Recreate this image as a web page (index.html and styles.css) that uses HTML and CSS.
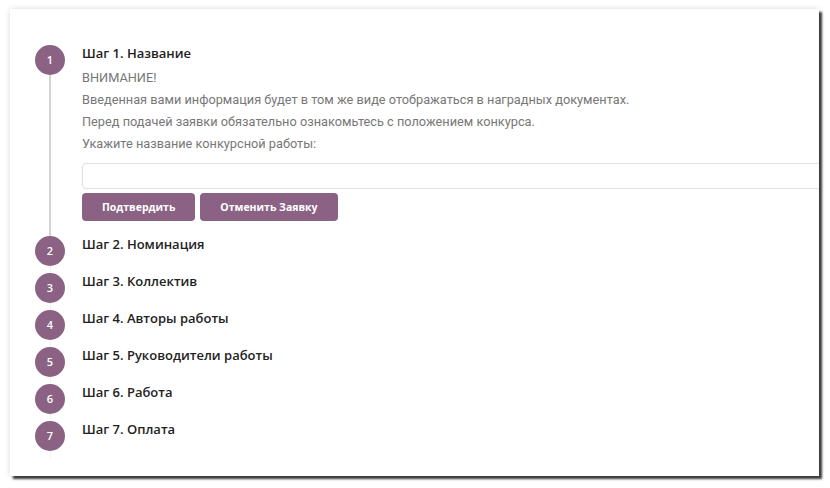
FILE: index.html
```html
<!DOCTYPE html>
<html>
  <head>
    <title>Подача заявки</title>
    <link rel="stylesheet" href="styles.css">
  </head>
  <body>
    <div class="page">
      <div class="panel">
        <div class="steps">
          <div class="step step-active">
            <div class="marker">
              <div class="circle">1</div>
              <div class="line"></div>
            </div>
            <div class="step-body">
              <h3 class="step-title">Шаг 1. Название</h3>
              <p>ВНИМАНИЕ!</p>
              <p>Введенная вами информация будет в том же виде отображаться в наградных документах.</p>
              <p>Перед подачей заявки обязательно ознакомьтесь с положением конкурса.</p>
              <p>Укажите название конкурсной работы:</p>
              <input type="text" class="field" />
              <div class="actions">
                <button>Подтвердить</button>
                <button>Отменить Заявку</button>
              </div>
            </div>
          </div>
          <div class="step">
            <div class="marker">
              <div class="circle">2</div>
              <div class="line"></div>
            </div>
            <div class="step-body"><h3 class="step-title">Шаг 2. Номинация</h3></div>
          </div>
          <div class="step">
            <div class="marker">
              <div class="circle">3</div>
              <div class="line"></div>
            </div>
            <div class="step-body"><h3 class="step-title">Шаг 3. Коллектив</h3></div>
          </div>
          <div class="step">
            <div class="marker">
              <div class="circle">4</div>
              <div class="line"></div>
            </div>
            <div class="step-body"><h3 class="step-title">Шаг 4. Авторы работы</h3></div>
          </div>
          <div class="step">
            <div class="marker">
              <div class="circle">5</div>
              <div class="line"></div>
            </div>
            <div class="step-body"><h3 class="step-title">Шаг 5. Руководители работы</h3></div>
          </div>
          <div class="step">
            <div class="marker">
              <div class="circle">6</div>
              <div class="line"></div>
            </div>
            <div class="step-body"><h3 class="step-title">Шаг 6. Работа</h3></div>
          </div>
          <div class="step">
            <div class="marker">
              <div class="circle">7</div>
              <div class="line"></div>
            </div>
            <div class="step-body"><h3 class="step-title">Шаг 7. Оплата</h3></div>
          </div>
        </div>
      </div>
    </div>
  </body>
</html>
```

FILE: styles.css
```css
body {
  margin: 0;
  background-color: #fff;
  font-family: Roboto, "Liberation Sans", sans-serif;
}
.page {
  padding: 9px 11px 12px 10px;
}
.panel {
  width: 809px;
  height: 467px;
  background-color: #fff;
  overflow: hidden;
  box-shadow: 3px 3px 2px #3c3c3c, 0 0 6px rgba(0, 0, 0, 0.15);
}
.steps {
  padding: 36px 0 0 25px;
}
.step {
  display: flex;
  gap: 17px;
}
.marker {
  display: flex;
  flex-direction: column;
  align-items: center;
  width: 30px;
  flex: none;
}
.circle {
  width: 30px;
  height: 30px;
  border-radius: 50%;
  background-color: #8b6283;
  color: #fff;
  font-family: "Open Sans", sans-serif;
  font-size: 11px;
  font-weight: 600;
  line-height: 30px;
  text-align: center;
}
.line {
  width: 1px;
  height: 7px;
  background-color: #f2f2f2;
}
.step-active .line {
  flex: 1;
  width: 2px;
  height: auto;
  background-color: #d3d3d3;
}
.step-body {
  flex: 1;
}
.step-active .step-body {
  padding-bottom: 15px;
}
.step-title {
  margin: 0;
  font-family: "Open Sans", sans-serif;
  font-size: 13px;
  font-weight: 600;
  line-height: 16px;
  color: #222;
}
p {
  margin: 0;
  font-size: 12.75px;
  line-height: 22px;
  color: #777;
}
.step-title + p {
  margin-top: 6px;
}
.field {
  display: block;
  box-sizing: border-box;
  width: 760px;
  height: 26px;
  margin-top: 8px;
  border: 1px solid #e0e0e0;
  border-radius: 4px;
}
.actions {
  display: flex;
  gap: 5px;
  margin-top: 4px;
}
button {
  height: 28px;
  padding: 0 20px;
  background-color: #8b6283;
  color: #fff;
  border: none;
  border-radius: 4px;
  font-family: "Open Sans", sans-serif;
  font-size: 10.5px;
  font-weight: 700;
  cursor: pointer;
}
```
